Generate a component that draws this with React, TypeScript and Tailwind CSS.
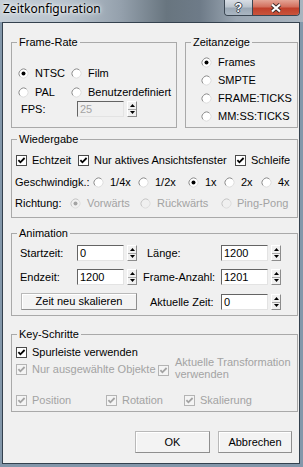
import type { ReactNode } from 'react';

const grey = 'text-[#a3a3a3]';

function Radio({ on = false, dim = false }: { on?: boolean; dim?: boolean }) {
  return (
    <svg width="13" height="13" viewBox="0 0 13 13" className="shrink-0">
      <circle cx="6.5" cy="6.5" r="4.5" fill={dim ? '#f0f0f0' : '#fff'} />
      <path d="M3.32 9.68A4.5 4.5 0 0 1 9.68 3.32" stroke={dim ? '#c4c4c4' : '#8a8a8a'} fill="none" />
      <path d="M9.68 3.32A4.5 4.5 0 0 1 3.32 9.68" stroke="#dedede" fill="none" />
      {on && <circle cx="6.5" cy="6.5" r="2" fill={dim ? '#a3a3a3' : '#000'} />}
    </svg>
  );
}

function Check({ dim = false }: { dim?: boolean }) {
  const ink = dim ? '#a3a3a3' : '#000';
  return (
    <svg width="11" height="11" viewBox="0 0 11 11" className="shrink-0">
      <rect x="0.5" y="0.5" width="10" height="10" fill={dim ? '#f4f4f4' : '#fff'} stroke={dim ? '#b4b4b4' : '#4a4a4a'} />
      <path d="M2.4 5.2L4.4 7.3L8.6 3" stroke={ink} strokeWidth="1.8" fill="none" />
    </svg>
  );
}

function Spinner() {
  return (
    <div className="ml-[3px] flex h-[16px] w-[10px] shrink-0 flex-col border border-t-white border-l-white border-r-[#8c8c8c] border-b-[#8c8c8c] bg-[#f0f0f0]">
      <div className="flex flex-1 items-center justify-center border-b border-[#a8a8a8]">
        <svg width="5" height="3" viewBox="0 0 5 3">
          <path d="M2.5 0L5 3H0Z" fill="#000" />
        </svg>
      </div>
      <div className="flex flex-1 items-center justify-center">
        <svg width="5" height="3" viewBox="0 0 5 3">
          <path d="M0 0H5L2.5 3Z" fill="#000" />
        </svg>
      </div>
    </div>
  );
}

function Field({ value, dim = false }: { value: string; dim?: boolean }) {
  return (
    <div
      className={`flex h-[16px] w-[47px] shrink-0 items-center border border-t-[#646464] border-l-[#646464] border-r-[#e3e3e3] border-b-[#e3e3e3] pl-[2px] ${
        dim ? 'bg-[#f0f0f0] text-[#a3a3a3]' : 'bg-white'
      }`}
    >
      {value}
    </div>
  );
}

function Button({ children, className = '' }: { children: ReactNode; className?: string }) {
  return (
    <div
      className={`flex items-center justify-center border border-[#b9b9b9] border-r-[#8e8e8e] border-b-[#8e8e8e] bg-[#f3f3f3] shadow-[inset_1px_1px_0_#fff] ${className}`}
    >
      {children}
    </div>
  );
}

function GroupBox({ label, className = '', children }: { label: string; className?: string; children: ReactNode }) {
  return (
    <div className={`relative border border-[#a9a9a9] ${className}`}>
      <span className="absolute -top-[7px] left-[5px] bg-[#f0f0f0] px-[2px]">{label}</span>
      {children}
    </div>
  );
}

function TitleBar() {
  return (
    <div className="flex h-[22px] shrink-0 items-start bg-[linear-gradient(90deg,#c4cdd6_0%,#b8c3cd_22%,#94a0ac_40%,#68757f_55%,#6e7b88_66%,#9aa6b2_78%,#a9b4bf_100%)]">
      <div className="pl-[3px] pt-[1px] font-['Noto_Sans',sans-serif] text-[12px] leading-[16px] text-black [text-shadow:0_0_6px_#fff,0_0_3px_#fff]">
        Zeitkonfiguration
      </div>
      <div className="ml-auto mr-[3px] flex h-[16px] overflow-hidden rounded-b-[4px] border border-t-0 border-[#3a4652]">
        <div className="flex w-[27px] items-center justify-center bg-[linear-gradient(180deg,#d8dee5_0%,#bcc5ce_45%,#9ba8b5_55%,#aab6c2_100%)] font-['Liberation_Sans',sans-serif] text-[12px] font-bold leading-[14px] text-white [text-shadow:1px_0_0_#3a4550,-1px_0_0_#3a4550,0_1px_0_#3a4550,0_-1px_0_#3a4550]">
          ?
        </div>
        <div className="flex w-[47px] items-center justify-center border-l border-[#3a4652] bg-[linear-gradient(180deg,#e4a596_0%,#d3705e_45%,#c0402b_55%,#c9543c_100%)]">
          <svg width="12" height="10" viewBox="0 0 12 10">
            <path d="M2 1.5L10 8.5M10 1.5L2 8.5" stroke="#3c2a28" strokeWidth="4" />
            <path d="M2 1.5L10 8.5M10 1.5L2 8.5" stroke="#fff" strokeWidth="2.2" />
          </svg>
        </div>
      </div>
    </div>
  );
}

export default function App() {
  return (
    <div className="flex h-[467px] w-[303px] flex-col bg-[#8397aa] font-['Liberation_Sans',Arial,sans-serif] text-[11px] leading-[13px] text-black">
      <TitleBar />
      <div className="mb-[3px] ml-[2px] mr-[3px] flex flex-1 flex-col border border-[#34414e] bg-[#f0f0f0] pl-[8px] pr-[1px]">
        <div className="mt-[19px] flex h-[86px] gap-[8px]">
          <GroupBox label="Frame-Rate" className="w-[166px] pl-[5px] pt-[22px]">
            <div className="flex h-[16px] items-center">
              <div className="flex w-[53px] items-center">
                <Radio on />
                <span className="ml-[5px]">NTSC</span>
              </div>
              <div className="flex items-center">
                <Radio />
                <span className="ml-[5px]">Film</span>
              </div>
            </div>
            <div className="mt-[3px] flex h-[16px] items-center">
              <div className="flex w-[53px] items-center">
                <Radio />
                <span className="ml-[5px]">PAL</span>
              </div>
              <div className="flex items-center">
                <Radio />
                <span className="ml-[5px]">Benutzerdefiniert</span>
              </div>
            </div>
            <div className="mt-[1px] flex h-[16px] items-center">
              <span className="ml-[4px] w-[56px]">FPS:</span>
              <Field value="25" dim />
              <Spinner />
            </div>
          </GroupBox>
          <GroupBox label="Zeitanzeige" className="flex-1 pl-[14px] pt-[10px]">
            {['Frames', 'SMPTE', 'FRAME:TICKS', 'MM:SS:TICKS'].map((t, i) => (
              <div key={t} className="flex h-[18px] items-center">
                <Radio on={i === 0} />
                <span className="ml-[5px]">{t}</span>
              </div>
            ))}
          </GroupBox>
        </div>

        <GroupBox label="Wiedergabe" className="mt-[11px] h-[79px] pt-[12px]">
          <div className="flex h-[16px] items-center pl-[4px]">
            <div className="flex w-[62px] items-center">
              <Check />
              <span className="ml-[5px]">Echtzeit</span>
            </div>
            <div className="flex w-[157px] items-center">
              <Check />
              <span className="ml-[5px]">Nur aktives Ansichtsfenster</span>
            </div>
            <div className="flex items-center">
              <Check />
              <span className="ml-[5px]">Schleife</span>
            </div>
          </div>
          <div className="mt-[6px] flex h-[16px] items-center pl-[3px]">
            <span className="w-[77px]">Geschwindigk.:</span>
            <div className="flex w-[45px] items-center">
              <Radio />
              <span className="ml-[5px]">1/4x</span>
            </div>
            <div className="flex w-[50px] items-center">
              <Radio />
              <span className="ml-[5px]">1/2x</span>
            </div>
            <div className="flex w-[36px] items-center">
              <Radio on />
              <span className="ml-[5px]">1x</span>
            </div>
            <div className="flex w-[37px] items-center">
              <Radio />
              <span className="ml-[5px]">2x</span>
            </div>
            <div className="flex items-center">
              <Radio />
              <span className="ml-[5px]">4x</span>
            </div>
          </div>
          <div className="mt-[5px] flex h-[16px] items-center pl-[3px]">
            <span className="w-[54px]">Richtung:</span>
            <div className="flex w-[70px] items-center">
              <Radio on dim />
              <span className={`ml-[5px] ${grey}`}>Vorwärts</span>
            </div>
            <div className="flex w-[81px] items-center">
              <Radio dim />
              <span className={`ml-[5px] ${grey}`}>Rückwärts</span>
            </div>
            <div className="flex items-center">
              <Radio dim />
              <span className={`ml-[4px] ${grey}`}>Ping-Pong</span>
            </div>
          </div>
        </GroupBox>

        <GroupBox label="Animation" className="mt-[15px] h-[83px] pl-[8px] pt-[11px]">
          <div className="flex h-[16px] items-center">
            <span className="w-[57px]">Startzeit:</span>
            <Field value="0" />
            <Spinner />
            <span className="w-[84px] pl-[10px]">Länge:</span>
            <Field value="1200" />
            <Spinner />
          </div>
          <div className="mt-[8px] flex h-[16px] items-center">
            <span className="w-[57px]">Endzeit:</span>
            <Field value="1200" />
            <Spinner />
            <span className="w-[84px] pl-[6px]">Frame-Anzahl:</span>
            <Field value="1201" />
            <Spinner />
          </div>
          <div className="mt-[8px] flex h-[17px] items-end">
            <Button className="ml-[1px] h-[17px] w-[116px]">Zeit neu skalieren</Button>
            <span className="flex h-[16px] w-[84px] items-center pl-[13px]">Aktuelle Zeit:</span>
            <Field value="0" />
            <Spinner />
          </div>
        </GroupBox>

        <GroupBox label="Key-Schritte" className="mt-[18px] h-[78px] pl-[4px] pt-[9px]">
          <div className="flex h-[16px] items-center">
            <Check />
            <span className="ml-[5px]">Spurleiste verwenden</span>
          </div>
          <div className="-mt-[4px] flex h-[24px] items-center">
            <div className="flex w-[142px] items-center pt-[2px]">
              <Check dim />
              <span className={`ml-[5px] ${grey}`}>Nur ausgewählte Objekte</span>
            </div>
            <div className="flex items-center">
              <div className="pt-[4px]">
                <Check dim />
              </div>
              <span className={`ml-[6px] leading-[12px] ${grey}`}>
                Aktuelle Transformation
                <br />
                verwenden
              </span>
            </div>
          </div>
          <div className="mt-[12px] flex h-[16px] items-center">
            <div className="flex w-[90px] items-center">
              <Check dim />
              <span className={`ml-[5px] ${grey}`}>Position</span>
            </div>
            <div className="flex w-[78px] items-center">
              <Check dim />
              <span className={`ml-[5px] ${grey}`}>Rotation</span>
            </div>
            <div className="flex items-center">
              <Check dim />
              <span className={`ml-[5px] ${grey}`}>Skalierung</span>
            </div>
          </div>
        </GroupBox>

        <div className="mr-[6px] mt-[19px] flex h-[22px] justify-end gap-[8px]">
          <Button className="w-[75px]">OK</Button>
          <Button className="w-[74px]">Abbrechen</Button>
        </div>
      </div>
    </div>
  );
}
